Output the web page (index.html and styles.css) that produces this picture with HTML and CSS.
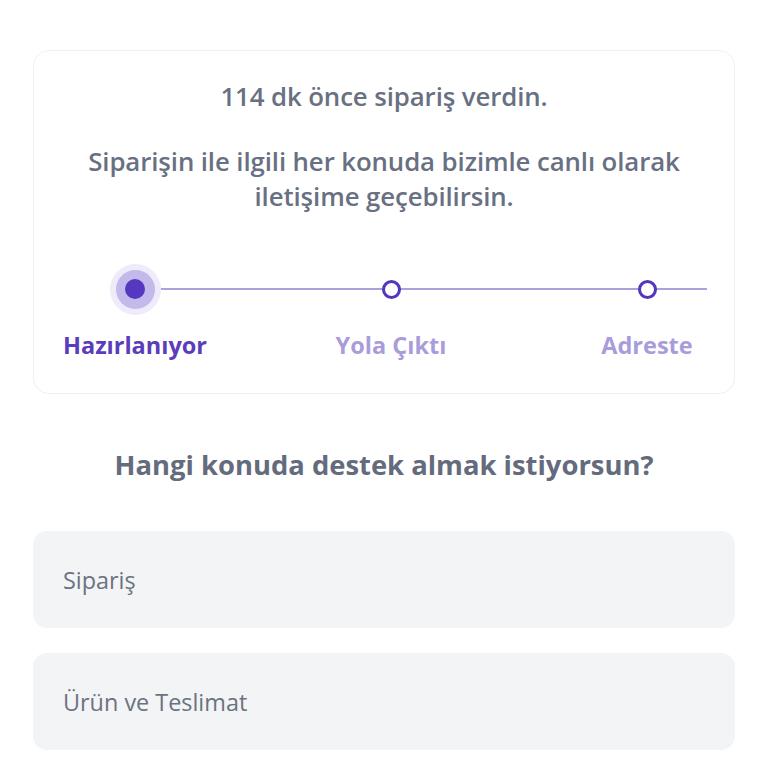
FILE: index.html
```html
<!DOCTYPE html>
<html lang="tr">
<head>
<meta charset="utf-8">
<link rel="stylesheet" href="styles.css">
</head>
<body>
<div class="page">
  <section class="card">
    <p class="lead">114 dk önce sipariş verdin.</p>
    <p class="info">Siparişin ile ilgili her konuda bizimle canlı olarak<br>iletişime geçebilirsin.</p>
    <div class="stepper">
      <div class="track"></div>
      <div class="step active">
        <div class="dot-wrap"><span class="halo"><span class="core"></span></span></div>
        <span class="label">Hazırlanıyor</span>
      </div>
      <div class="step">
        <div class="dot-wrap"><span class="ring"></span></div>
        <span class="label">Yola Çıktı</span>
      </div>
      <div class="step">
        <div class="dot-wrap"><span class="ring"></span></div>
        <span class="label">Adreste</span>
      </div>
    </div>
  </section>
  <h2 class="question">Hangi konuda destek almak istiyorsun?</h2>
  <div class="options">
    <div class="option">Sipariş</div>
    <div class="option">Ürün ve Teslimat</div>
  </div>
</div>
</body>
</html>
```

FILE: styles.css
```css
html, body {
  margin: 0;
  padding: 0;
  background: #ffffff;
}
body {
  font-family: "Open Sans", "Noto Sans", sans-serif;
  color: #687082;
}
.page {
  padding: 50px 33px 0 33px;
}
.card {
  border: 1px solid #efeff6;
  border-radius: 16px;
  padding: 28px 0 33px 0;
  text-align: center;
}
.lead {
  margin: 0;
  font-size: 25.8px;
  line-height: 35px;
  font-weight: 600;
  letter-spacing: -0.1px;
}
.info {
  margin: 30px 0 0 0;
  font-size: 25.8px;
  line-height: 35px;
  font-weight: 600;
  letter-spacing: -0.1px;
}
.stepper {
  position: relative;
  display: flex;
  gap: 96px;
  padding-left: 21px;
  margin-top: 50px;
}
.track {
  position: absolute;
  left: 101px;
  width: 572px;
  top: 24px;
  height: 2px;
  background: #aca1de;
}
.step {
  width: 160px;
  display: flex;
  flex-direction: column;
  align-items: center;
  gap: 16px;
  position: relative;
}
.dot-wrap {
  width: 52px;
  height: 50px;
  display: flex;
  align-items: center;
  justify-content: center;
}
.halo {
  width: 39px;
  height: 39px;
  border-radius: 50%;
  background: #c3b9ea;
  box-shadow: 0 0 0 6px #efebfa;
  display: flex;
  align-items: center;
  justify-content: center;
}
.core {
  width: 20px;
  height: 20px;
  border-radius: 50%;
  background: #5637c0;
}
.ring {
  width: 13px;
  height: 13px;
  border-radius: 50%;
  border: 3px solid #5535bb;
  background: #ffffff;
}
.label {
  font-size: 23.5px;
  line-height: 30px;
  font-weight: 700;
  color: #a99cdb;
  white-space: nowrap;
}
.step.active .label {
  color: #5a3cbc;
}
.question {
  margin: 53px 0 0 0;
  text-align: center;
  font-size: 27.4px;
  line-height: 36px;
  font-weight: 700;
  color: #646b7c;
}
.options {
  margin-top: 48px;
  display: flex;
  flex-direction: column;
  gap: 25px;
}
.option {
  background: #f3f4f6;
  border-radius: 14px;
  height: 97px;
  display: flex;
  align-items: center;
  padding-left: 30px;
  font-size: 23.4px;
  color: #6b7280;
}
```
